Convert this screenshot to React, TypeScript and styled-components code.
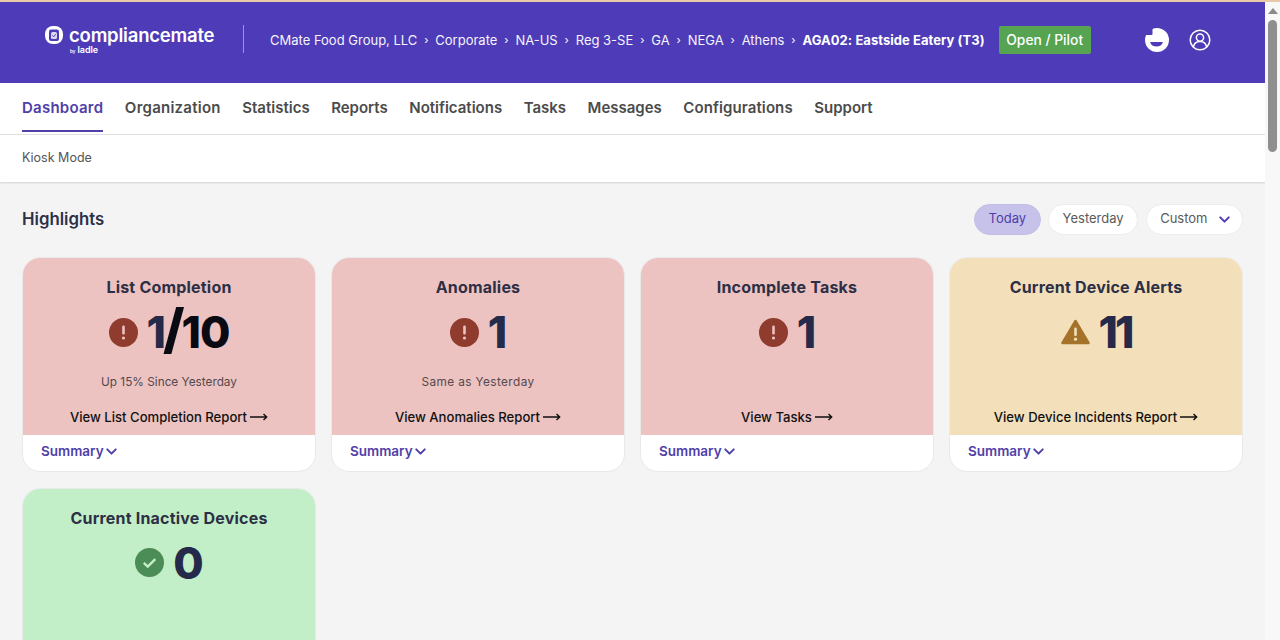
import { Fragment } from 'react'
import { ChevronDown } from 'lucide-react'
import styled, { createGlobalStyle } from 'styled-components'

const purple = '#4e3bb8'
const inkPurple = '#4f40a8'
const navy = '#25294a'

const GlobalStyle = createGlobalStyle`
  html, body {
    margin: 0;
    height: 100%;
    overflow: hidden;
    font-family: Inter, "Open Sans", sans-serif;
  }
  * { box-sizing: border-box; }
`

const Shell = styled.div`
  display: flex;
  width: 1280px;
  height: 640px;
  overflow: hidden;
  border-top: 2px solid #e8c9a8;
`

const Page = styled.main`
  width: 1265px;
  flex: none;
  background: #f4f4f5;
  overflow: hidden;
`

const Scrollbar = styled.div`
  flex: 1;
  background: #f8f8f8;
  display: flex;
  flex-direction: column;
  align-items: center;
  padding-top: 6px;
  gap: 6px;
`

const ScrollArrow = styled.div`
  width: 0;
  height: 0;
  border-left: 5px solid transparent;
  border-right: 5px solid transparent;
  border-bottom: 6px solid #8a8a8a;
`

const ScrollThumb = styled.div`
  width: 9px;
  height: 132px;
  border-radius: 5px;
  background: #8f8f8f;
`

const Header = styled.header`
  height: 81px;
  background: ${purple};
  display: flex;
  align-items: flex-start;
  color: #fff;
`

const Logo = styled.div`
  width: 201px;
  margin: 21px 0 0 42px;
  flex: none;
  display: flex;
  flex-direction: column;
`

const LogoRow = styled.div`
  display: flex;
  align-items: center;
  gap: 6px;
  height: 24px;
  padding-left: 3px;
`

const LogoName = styled.span`
  font-size: 18.5px;
  font-weight: 600;
  letter-spacing: -0.2px;
  line-height: 24px;
`

const LogoSub = styled.div`
  margin: -2px 0 0 28px;
  font-size: 9px;
  font-weight: 600;
  line-height: 10px;
  small { font-size: 4.5px; margin-right: 2px; }
`

const Divider = styled.div`
  width: 1px;
  height: 28px;
  margin: 23px 26px 0 0;
  background: rgba(255, 255, 255, 0.45);
  flex: none;
`

const Crumbs = styled.nav`
  display: flex;
  align-items: center;
  height: 24px;
  margin-top: 26px;
  font-size: 13px;
  white-space: nowrap;
`

const Crumb = styled.span`
  opacity: 0.95;
`

const CrumbSep = styled.span`
  width: 18px;
  text-align: center;
  font-size: 11px;
`

const CurrentCrumb = styled.span`
  font-weight: 700;
  font-size: 13px;
  letter-spacing: 0.05px;
`

const Status = styled.div`
  margin: 24px 0 0 14px;
  width: 92px;
  height: 28px;
  background: #56a352;
  border-radius: 2px;
  font-size: 13.8px;
  font-weight: 500;
  display: flex;
  align-items: center;
  justify-content: center;
`

const HeaderIcons = styled.div`
  display: flex;
  gap: 20px;
  align-items: center;
  margin: 26px 0 0 54px;
`

const Nav = styled.div`
  height: 52px;
  background: #fff;
  border-bottom: 1px solid #e2e2e2;
  padding-left: 22px;
  display: flex;
  gap: 21.5px;
`

const NavItem = styled.a<{ $active?: boolean; $track?: number }>`
  height: 49px;
  font-size: 15px;
  font-weight: 600;
  line-height: 50px;
  letter-spacing: ${p => p.$track ?? 0}px;
  color: ${p => (p.$active ? inkPurple : '#4b4b4b')};
  border-bottom: ${p => (p.$active ? `2px solid ${inkPurple}` : 'none')};
`

const SubNav = styled.div`
  height: 47px;
  background: #fff;
  padding: 0 22px;
  font-size: 12.5px;
  line-height: 46px;
  color: #555;
  box-shadow: 0 1px 2px rgba(0, 0, 0, 0.14);
`

const Content = styled.section`
  padding: 22px 22px 0;
`

const TitleRow = styled.div`
  display: flex;
  align-items: center;
  justify-content: space-between;
  height: 31px;
  margin-bottom: 22px;
`

const Title = styled.h2`
  margin: 0 0 2px;
  font-size: 16.8px;
  font-weight: 600;
  color: #2c3048;
`

const Filters = styled.div`
  display: flex;
  gap: 7.5px;
`

const Pill = styled.button<{ $active?: boolean }>`
  height: 31px;
  padding: 0 13.5px 3px;
  border-radius: 16px;
  border: 1px solid ${p => (p.$active ? '#c2bee8' : '#ececec')};
  background: ${p => (p.$active ? '#c6c2ea' : '#fff')};
  color: ${p => (p.$active ? inkPurple : '#5a5a5a')};
  font: 400 13px Inter, sans-serif;
  display: flex;
  align-items: center;
  gap: 8px;
`

const PillChevron = styled(ChevronDown)`
  margin: 3px -4px 0 0;
`

const Cards = styled.div`
  display: grid;
  grid-template-columns: repeat(4, 294px);
  gap: 15.5px 15px;
`

const Card = styled.article`
  height: 215px;
  border-radius: 18px;
  border: 1px solid #e9e9e9;
  background: #fff;
  overflow: hidden;
  display: flex;
  flex-direction: column;
`

const CardBody = styled.div<{ $tone: string }>`
  height: 177px;
  flex: none;
  background: ${p => p.$tone};
  display: flex;
  flex-direction: column;
  align-items: center;
  padding-top: 18px;
`

const CardTitle = styled.h3`
  margin: 0;
  font-size: 16px;
  line-height: 22px;
  font-weight: 700;
  letter-spacing: 0.2px;
  color: #2c2f45;
`

const Metric = styled.div<{ $track?: number }>`
  height: 50px;
  margin-top: 9px;
  display: flex;
  align-items: center;
  gap: 9px;
  font-size: 44px;
  font-weight: 800;
  letter-spacing: ${p => p.$track ?? -1}px;
  color: ${navy};
`

const Dark = styled.span`
  color: #0a0a12;
`

const Slash = styled.span`
  font-size: 54px;
  line-height: 44px;
  margin: 0 -2px;
`

const Note = styled.div<{ $track?: number }>`
  height: 20px;
  margin-top: 15px;
  font-size: 11.8px;
  line-height: 20px;
  letter-spacing: ${p => p.$track ?? 0}px;
  color: #55484f;
`

const ReportLink = styled.a`
  margin-top: auto;
  margin-bottom: 8px;
  display: flex;
  align-items: center;
  gap: 3px;
  font-size: 13.1px;
  font-weight: 500;
  line-height: 20px;
  color: #111;
`

const Summary = styled.div`
  flex: 1;
  padding: 0 18px 4px;
  display: flex;
  align-items: center;
  font-size: 13.5px;
  font-weight: 600;
  color: ${inkPurple};
`

const SummaryChevron = styled(ChevronDown)`
  margin-left: -1px;
`

const LadleMark = () => (
  <svg width="18" height="18" viewBox="0 0 18 18">
    <rect x="0" y="0" width="18" height="18" rx="8" fill="#fff" />
    <rect x="4" y="3.5" width="10" height="11.5" rx="2" fill={purple} />
    <rect x="6" y="6" width="6" height="7" rx="1.5" fill="#d9d5f3" />
    <path d="M7.4 9.4l1.3 1.3 2-2.4" fill="none" stroke={purple} strokeWidth="1" />
  </svg>
)

const StatusMark = () => (
  <svg width="24" height="24" viewBox="0 0 24 24">
    <circle cx="12" cy="12" r="12" fill="#fff" />
    <path d="M0 0h7.5v6a1 1 0 0 1-1 1H0z" fill={purple} />
    <path d="M5 14h13c-.9 3-3.300 4.500-6.500 4.500S5.900 17 5 14z" fill={purple} />
  </svg>
)

const UserMark = () => (
  <svg width="22" height="22" viewBox="0 0 22 22" fill="none" stroke="#fff" strokeWidth="1.5">
    <circle cx="11" cy="11" r="9.8" />
    <circle cx="11" cy="8.6" r="3.6" />
    <path d="M4.4 18c.6-3.6 3.2-5.6 6.6-5.6s6 2 6.6 5.6" />
  </svg>
)

const ErrorMark = () => (
  <svg width="29" height="29" viewBox="0 0 29 29">
    <circle cx="14.5" cy="14.5" r="14.5" fill="#8f3b2e" />
    <rect x="13.2" y="7.5" width="2.6" height="9" rx="1.2" fill="#ecc3c0" />
    <circle cx="14.5" cy="20" r="1.6" fill="#ecc3c0" />
  </svg>
)

const WarnMark = () => (
  <svg width="29" height="26" viewBox="0 0 29 26">
    <path d="M14.5 2 27.5 24H1.5z" fill="#a5722a" stroke="#a5722a" strokeWidth="2.5" strokeLinejoin="round" />
    <rect x="13.2" y="8.5" width="2.6" height="8.5" rx="1.2" fill="#f3e0bb" />
    <circle cx="14.5" cy="20.2" r="1.6" fill="#f3e0bb" />
  </svg>
)

const OkMark = () => (
  <svg width="29" height="29" viewBox="0 0 29 29">
    <circle cx="14.5" cy="14.5" r="14.5" fill="#4c8c56" />
    <path d="M8.8 14.8l3.9 3.7 7.6-7.4" fill="none" stroke="#c3efc8" strokeWidth="2.4" />
  </svg>
)

const Arrow = () => (
  <svg width="18" height="8" viewBox="0 0 18 8" fill="none" stroke="#111" strokeWidth="1.4">
    <path d="M0 4h16.5M13.5 1l3.2 3-3.2 3" />
  </svg>
)

const crumbs = ['CMate Food Group, LLC', 'Corporate', 'NA-US', 'Reg 3-SE', 'GA', 'NEGA', 'Athens']
const tabs = [
  { label: 'Dashboard', track: 0.25 },
  { label: 'Organization', track: 0.25 },
  { label: 'Statistics' },
  { label: 'Reports' },
  { label: 'Notifications' },
  { label: 'Tasks' },
  { label: 'Messages' },
  { label: 'Configurations', track: 0.1 },
  { label: 'Support' },
]

const RED = '#ecc3c0'
const cards = [
  {
    title: 'List Completion',
    tone: RED,
    mark: <ErrorMark />,
    value: <>1<Dark><Slash>/</Slash>10</Dark></>,
    note: 'Up 15% Since Yesterday',
    link: 'View List Completion Report',
  },
  {
    title: 'Anomalies',
    tone: RED,
    mark: <ErrorMark />,
    value: '1',
    note: 'Same as Yesterday',
    noteTrack: 0.4,
    link: 'View Anomalies Report',
  },
  { title: 'Incomplete Tasks', tone: RED, mark: <ErrorMark />, value: '1', link: 'View Tasks' },
  { title: 'Current Device Alerts', tone: '#f3e0bb', mark: <WarnMark />, value: '11', track: -3, link: 'View Device Incidents Report' },
  { title: 'Current Inactive Devices', tone: '#c3efc8', mark: <OkMark />, value: '0' },
]

export default function App() {
  return (
    <>
      <GlobalStyle />
      <Shell>
        <Page>
          <Header>
            <Logo>
              <LogoRow>
                <LadleMark />
                <LogoName>compliancemate</LogoName>
              </LogoRow>
              <LogoSub><small>by</small>ladle</LogoSub>
            </Logo>
            <Divider />
            <Crumbs>
              {crumbs.map(c => (
                <Fragment key={c}>
                  <Crumb>{c}</Crumb>
                  <CrumbSep>›</CrumbSep>
                </Fragment>
              ))}
              <CurrentCrumb>AGA02: Eastside Eatery (T3)</CurrentCrumb>
            </Crumbs>
            <Status>Open / Pilot</Status>
            <HeaderIcons>
              <StatusMark />
              <UserMark />
            </HeaderIcons>
          </Header>
          <Nav>
            {tabs.map((t, i) => (
              <NavItem key={t.label} $active={i === 0} $track={t.track}>{t.label}</NavItem>
            ))}
          </Nav>
          <SubNav>Kiosk Mode</SubNav>
          <Content>
            <TitleRow>
              <Title>Highlights</Title>
              <Filters>
                <Pill $active>Today</Pill>
                <Pill>Yesterday</Pill>
                <Pill>Custom <PillChevron size={17} color={purple} strokeWidth={2.8} /></Pill>
              </Filters>
            </TitleRow>
            <Cards>
              {cards.map(c => (
                <Card key={c.title}>
                  <CardBody $tone={c.tone}>
                    <CardTitle>{c.title}</CardTitle>
                    <Metric $track={c.track}>{c.mark}<span>{c.value}</span></Metric>
                    {c.note && <Note $track={c.noteTrack}>{c.note}</Note>}
                    {c.link && <ReportLink>{c.link} <Arrow /></ReportLink>}
                  </CardBody>
                  {c.link && <Summary>Summary <SummaryChevron size={17} strokeWidth={2.8} /></Summary>}
                </Card>
              ))}
            </Cards>
          </Content>
        </Page>
        <Scrollbar>
          <ScrollArrow />
          <ScrollThumb />
        </Scrollbar>
      </Shell>
    </>
  )
}
